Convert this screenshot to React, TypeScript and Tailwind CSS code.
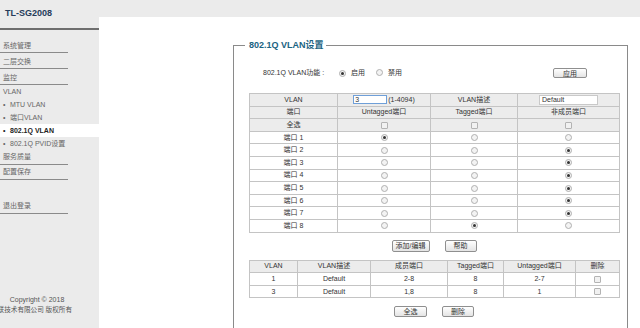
import React from 'react';

function Radio({ checked }: { checked?: boolean }) {
  return (
    <span className="inline-flex items-center justify-center w-[7px] h-[7px] rounded-full border border-[#b0b0b0] bg-[#f3f3f3] align-middle">
      {checked && <span className="w-[3px] h-[3px] rounded-full bg-[#333]" />}
    </span>
  );
}

function Check() {
  return <span className="inline-block w-[7px] h-[7px] rounded-[1px] border border-[#b3b3b3] bg-[#f1f1f1] align-middle" />;
}

const btn =
  'flex items-center justify-center border border-[#8f8f8f] rounded-[2px] bg-gradient-to-b from-white to-[#e4e4e4] text-[7px] leading-none text-[#333]';

const ports = [1, 2, 3, 4, 5, 6, 7, 8];

export default function App() {
  return (
    <div className="flex w-[640px] h-[328px] overflow-hidden bg-[#ebebeb] font-['Liberation_Sans','Noto_Sans_CJK_SC',sans-serif]">
      {/* 左侧菜单 */}
      <div className="w-[99px] flex flex-col text-[7px] text-[#666]">
        <div className="h-[30px] border-b-2 border-[#6e6e6e] pl-[5px] pt-[7px] text-[9px] leading-[12px] font-bold text-[#253b5a]">
          TL-SG2008
        </div>
        <div className="mt-[7px] w-[68px] h-[16px] pt-[3px] pl-[3px] leading-[12px] border-b border-[#8a8a8a]">系统管理</div>
        <div className="w-[68px] h-[16px] pt-[3px] pl-[3px] leading-[12px] border-b border-[#8a8a8a]">二层交换</div>
        <div className="w-[68px] h-[16px] pt-[3px] pl-[3px] leading-[12px] border-b border-[#8a8a8a]">监控</div>
        <div className="h-[13px] leading-[13px] pl-[3px]">VLAN</div>
        <div className="h-[13px] leading-[13px] pl-[3px] flex">
          <span className="w-[7px]">•</span>MTU VLAN
        </div>
        <div className="h-[13px] leading-[13px] pl-[3px] flex">
          <span className="w-[7px]">•</span>端口VLAN
        </div>
        <div className="h-[13px] leading-[13px] pl-[3px] flex bg-white font-bold text-[#222]">
          <span className="w-[7px]">•</span>802.1Q VLAN
        </div>
        <div className="h-[13px] leading-[13px] pl-[3px] flex">
          <span className="w-[7px]">•</span>802.1Q PVID设置
        </div>
        <div className="w-[68px] h-[15px] pt-[1px] pl-[3px] leading-[12px] border-b border-[#8a8a8a]">服务质量</div>
        <div className="w-[68px] h-[15px] pt-[1px] pl-[3px] leading-[12px] border-b border-[#8a8a8a]">配置保存</div>
        <div className="mt-[19px] w-[68px] h-[15px] pt-[1px] pl-[3px] leading-[12px] border-b border-[#8a8a8a]">退出登录</div>
        <div className="mt-auto mb-[13px] w-[74px] flex flex-col items-center leading-[10px] text-[#555]">
          <span className="whitespace-nowrap">Copyright © 2018</span>
          <span className="whitespace-nowrap text-[6.6px] mr-[11px]">普联技术有限公司 版权所有</span>
        </div>
      </div>

      {/* 主区域 */}
      <div className="flex-1 min-h-0 pt-[17px]">
        <div className="h-full bg-white pt-[22px] overflow-hidden">
          <div className="ml-[134px] w-[395px] text-[7px] text-[#333]">
            {/* 标题边框 */}
            <div className="flex items-end h-[12px]">
              <div className="w-[12px] h-[6px] border-l border-t border-[#8a8a8a]" />
              <div className="self-stretch pl-[4px] pr-[2px] text-[9px] leading-[12px] font-bold text-[#1b6382]">802.1Q VLAN设置</div>
              <div className="flex-1 h-[6px] border-r border-t border-[#8a8a8a]" />
            </div>
            <div className="h-[280px] border-x border-[#8a8a8a] pl-[15px]">
              <div className="pt-[16px] h-[28px] flex items-center">
                <span className="ml-[14px] w-[76px]">802.1Q VLAN功能 :</span>
                <Radio checked />
                <span className="ml-[5px]">启用</span>
                <span className="ml-[11px]"><Radio /></span>
                <span className="ml-[5px]">禁用</span>
                <button className={`${btn} ml-[auto] mr-[40px] w-[34px] h-[10px]`}>应用</button>
              </div>

              <table className="mt-[14px] w-[370px] table-fixed border-collapse text-center">
                <colgroup>
                  <col className="w-[88px]" />
                  <col className="w-[93px]" />
                  <col className="w-[87px]" />
                  <col className="w-[102px]" />
                </colgroup>
                <tbody>
                  <tr className="h-[12.6px] bg-[#ececec]">
                    <td className="border border-[#c4c4c4] p-0 leading-[10px]">VLAN</td>
                    <td className="border border-[#c4c4c4] p-0 leading-[10px]">
                      <div className="flex items-center justify-center">
                        <span className="w-[34px] h-[9px] border border-[#6f9fd8] bg-white text-left pl-[1px] leading-[7px]">3</span>
                        <span className="ml-[1px]">(1-4094)</span>
                      </div>
                    </td>
                    <td className="border border-[#c4c4c4] p-0 leading-[10px]">VLAN描述</td>
                    <td className="border border-[#c4c4c4] p-0 leading-[10px]">
                      <div className="flex justify-center">
                        <span className="w-[59px] h-[10px] border border-[#c9c9c9] bg-white text-left pl-[2px] leading-[8px]">Default</span>
                      </div>
                    </td>
                  </tr>
                  <tr className="h-[12.6px] bg-[#ececec]">
                    <td className="border border-[#c4c4c4] p-0 leading-[10px]">端口</td>
                    <td className="border border-[#c4c4c4] p-0 leading-[10px]">Untagged端口</td>
                    <td className="border border-[#c4c4c4] p-0 leading-[10px]">Tagged端口</td>
                    <td className="border border-[#c4c4c4] p-0 leading-[10px]">非成员端口</td>
                  </tr>
                  <tr className="h-[12.6px] bg-[#ececec]">
                    <td className="border border-[#c4c4c4] p-0 leading-[10px]">全选</td>
                    <td className="border border-[#c4c4c4] p-0 leading-[10px]"><Check /></td>
                    <td className="border border-[#c4c4c4] p-0 leading-[10px]"><Check /></td>
                    <td className="border border-[#c4c4c4] p-0 leading-[10px]"><Check /></td>
                  </tr>
                  {ports.map((p) => (
                    <tr key={p} className="h-[12.6px] bg-white">
                      <td className="border border-[#c4c4c4] p-0 leading-[10px]">端口 {p}</td>
                      <td className="border border-[#c4c4c4] p-0 leading-[10px]"><Radio checked={p === 1} /></td>
                      <td className="border border-[#c4c4c4] p-0 leading-[10px]"><Radio checked={p === 8} /></td>
                      <td className="border border-[#c4c4c4] p-0 leading-[10px]"><Radio checked={p > 1 && p < 8} /></td>
                    </tr>
                  ))}
                </tbody>
              </table>

              <div className="mt-[7px] w-[370px] flex justify-center gap-[15px]">
                <button className={`${btn} w-[38px] h-[12px]`}>添加/编辑</button>
                <button className={`${btn} w-[32px] h-[12px]`}>帮助</button>
              </div>

              <table className="mt-[8px] w-[370px] table-fixed border-collapse text-center">
                <colgroup>
                  <col className="w-[48px]" />
                  <col className="w-[73px]" />
                  <col className="w-[77px]" />
                  <col className="w-[56px]" />
                  <col className="w-[72px]" />
                  <col className="w-[44px]" />
                </colgroup>
                <tbody>
                  <tr className="h-[12.6px] bg-[#ececec]">
                    <td className="border border-[#c4c4c4] p-0 leading-[10px]">VLAN</td>
                    <td className="border border-[#c4c4c4] p-0 leading-[10px]">VLAN描述</td>
                    <td className="border border-[#c4c4c4] p-0 leading-[10px]">成员端口</td>
                    <td className="border border-[#c4c4c4] p-0 leading-[10px]">Tagged端口</td>
                    <td className="border border-[#c4c4c4] p-0 leading-[10px]">Untagged端口</td>
                    <td className="border border-[#c4c4c4] p-0 leading-[10px]">删除</td>
                  </tr>
                  {[
                    ['1', 'Default', '2-8', '8', '2-7'],
                    ['3', 'Default', '1,8', '8', '1'],
                  ].map((r) => (
                    <tr key={r[0]} className="h-[12.6px] bg-white">
                      {r.map((c, i) => (
                        <td key={i} className="border border-[#c4c4c4] p-0 leading-[10px]">{c}</td>
                      ))}
                      <td className="border border-[#c4c4c4] p-0 leading-[10px]"><Check /></td>
                    </tr>
                  ))}
                </tbody>
              </table>

              <div className="mt-[8px] w-[370px] flex justify-center gap-[15px]">
                <button className={`${btn} w-[33px] h-[11px]`}>全选</button>
                <button className={`${btn} w-[32px] h-[11px]`}>删除</button>
              </div>
            </div>
          </div>
        </div>
      </div>
    </div>
  );
}
